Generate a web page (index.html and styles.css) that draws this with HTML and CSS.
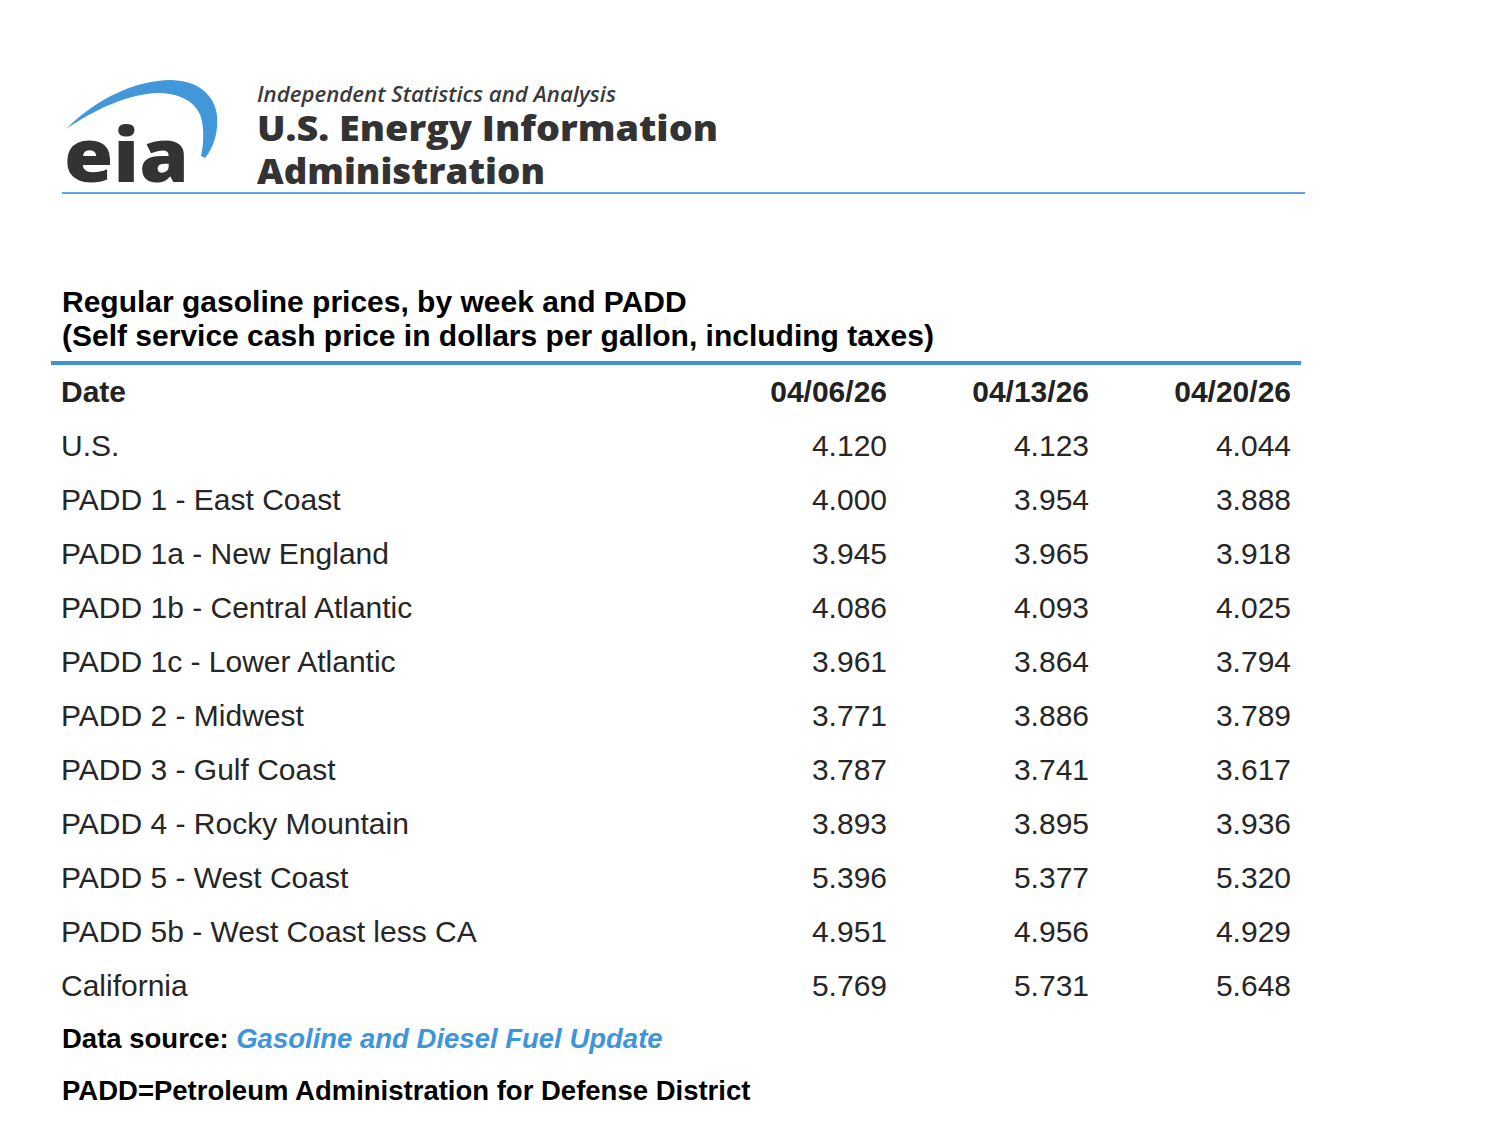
FILE: index.html
```html
<!DOCTYPE html>
<html lang="en">
<head>
<meta charset="utf-8">
<title>Regular gasoline prices, by week and PADD</title>
<link rel="stylesheet" href="styles.css">
</head>
<body>
<header class="brand">
  <svg class="logo" width="660" height="117" viewBox="62 75 660 117" xmlns="http://www.w3.org/2000/svg">
    <path class="swoosh" d="M66,129 C96,99 136,80 171,80 C204,81 220,101 217,127 C216,140 211,151 205,158 L201,156 C204,142 204,129 201,117 C196,102 180,93 158,93 C128,94 96,109 66,129 Z"/>
    <text class="eia" x="64" y="182" textLength="125" lengthAdjust="spacingAndGlyphs">eia</text>
    <text class="tagline" x="257" y="102" textLength="359" lengthAdjust="spacingAndGlyphs">Independent Statistics and Analysis</text>
    <text class="agency" x="257" y="141" textLength="461" lengthAdjust="spacingAndGlyphs">U.S. Energy Information</text>
    <text class="agency" x="257" y="184" textLength="288" lengthAdjust="spacingAndGlyphs">Administration</text>
  </svg>
</header>
<main class="content">
  <h1 class="title">Regular gasoline prices, by week and PADD<br>(Self service cash price in dollars per gallon, including taxes)</h1>
  <table class="prices">
    <colgroup>
      <col class="col-label">
      <col class="col-num">
      <col class="col-num">
      <col class="col-num">
    </colgroup>
    <thead>
      <tr><th class="label">Date</th><th>04/06/26</th><th>04/13/26</th><th>04/20/26</th></tr>
    </thead>
    <tbody>
      <tr><td class="label">U.S.</td><td>4.120</td><td>4.123</td><td>4.044</td></tr>
      <tr><td class="label">PADD 1 - East Coast</td><td>4.000</td><td>3.954</td><td>3.888</td></tr>
      <tr><td class="label">PADD 1a - New England</td><td>3.945</td><td>3.965</td><td>3.918</td></tr>
      <tr><td class="label">PADD 1b - Central Atlantic</td><td>4.086</td><td>4.093</td><td>4.025</td></tr>
      <tr><td class="label">PADD 1c - Lower Atlantic</td><td>3.961</td><td>3.864</td><td>3.794</td></tr>
      <tr><td class="label">PADD 2 - Midwest</td><td>3.771</td><td>3.886</td><td>3.789</td></tr>
      <tr><td class="label">PADD 3 - Gulf Coast</td><td>3.787</td><td>3.741</td><td>3.617</td></tr>
      <tr><td class="label">PADD 4 - Rocky Mountain</td><td>3.893</td><td>3.895</td><td>3.936</td></tr>
      <tr><td class="label">PADD 5 - West Coast</td><td>5.396</td><td>5.377</td><td>5.320</td></tr>
      <tr><td class="label">PADD 5b - West Coast less CA</td><td>4.951</td><td>4.956</td><td>4.929</td></tr>
      <tr><td class="label">California</td><td>5.769</td><td>5.731</td><td>5.648</td></tr>
    </tbody>
  </table>
  <p class="source">Data source: <a class="source-link" href="#">Gasoline and Diesel Fuel Update</a></p>
  <p class="note">PADD=Petroleum Administration for Defense District</p>
</main>
</body>
</html>
```

FILE: styles.css
```css
html, body {
  margin: 0;
  padding: 0;
  background: #ffffff;
}

body {
  font-family: "Liberation Sans", Arial, Helvetica, sans-serif;
  color: #000000;
}

.brand {
  margin-left: 62px;
  width: 1243px;
  padding-top: 75px;
  border-bottom: 2px solid #5ba6e0;
}

.logo {
  display: block;
  overflow: visible;
}

.swoosh {
  fill: #4297da;
}

.eia {
  font-family: "Open Sans", "DejaVu Sans", sans-serif;
  font-weight: 800;
  font-size: 74px;
  fill: #333333;
}

.tagline {
  font-family: "Open Sans", "DejaVu Sans", sans-serif;
  font-style: italic;
  font-weight: 600;
  font-size: 21px;
  fill: #3a3a3a;
}

.agency {
  font-family: "Open Sans", "DejaVu Sans", sans-serif;
  font-weight: 800;
  font-size: 36px;
  fill: #333333;
}

.content {
  padding-left: 51px;
  width: 1250px;
}

.title {
  margin: 91px 0 0 11px;
  font-size: 30px;
  line-height: 34px;
  font-weight: 700;
  color: #000000;
}

.prices {
  margin-top: 8px;
  width: 1250px;
  border-collapse: collapse;
  border-top: 4px solid #4392d2;
  table-layout: fixed;
}

.col-label {
  width: 644px;
}

.col-num {
  width: 202px;
}

.prices th,
.prices td {
  height: 54px;
  padding: 0 10px;
  font-size: 30px;
  color: #262626;
  text-align: right;
  vertical-align: middle;
  white-space: nowrap;
}

.prices th {
  font-weight: 700;
  color: #222222;
}

.prices .label {
  text-align: left;
}

.source,
.note {
  margin: 0 0 0 11px;
  font-size: 27.5px;
  line-height: 34px;
  font-weight: 700;
  color: #000000;
}

.source {
  margin-top: 9px;
}

.note {
  margin-top: 18px;
}

.source-link {
  color: #3d95dc;
  font-style: italic;
  text-decoration: none;
}
```
